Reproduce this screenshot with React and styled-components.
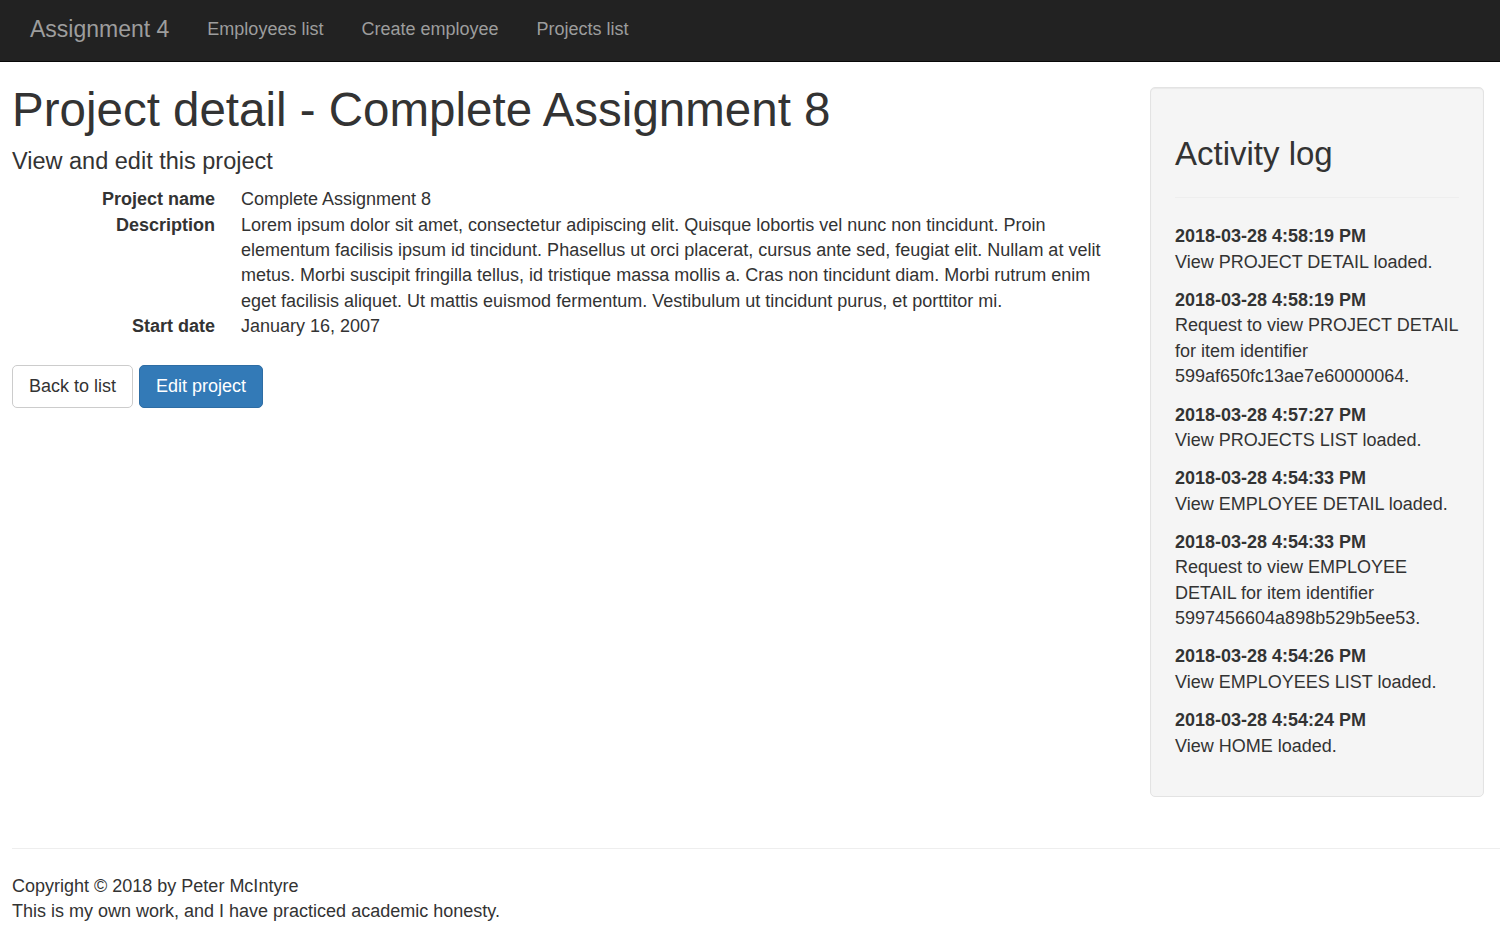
import styled, { createGlobalStyle } from 'styled-components';

const GlobalStyle = createGlobalStyle`
  html, body {
    margin: 0;
    padding: 0;
    background: #fff;
  }
  body {
    font-family: "Liberation Sans", Arial, Helvetica, sans-serif;
    font-size: 18px;
    line-height: 25.4px;
    color: #333;
  }
  * {
    box-sizing: border-box;
  }
`;

const activity = [
  { time: '2018-03-28 4:58:19 PM', text: 'View PROJECT DETAIL loaded.' },
  {
    time: '2018-03-28 4:58:19 PM',
    text: 'Request to view PROJECT DETAIL for item identifier 599af650fc13ae7e60000064.',
  },
  { time: '2018-03-28 4:57:27 PM', text: 'View PROJECTS LIST loaded.' },
  { time: '2018-03-28 4:54:33 PM', text: 'View EMPLOYEE DETAIL loaded.' },
  {
    time: '2018-03-28 4:54:33 PM',
    text: 'Request to view EMPLOYEE DETAIL for item identifier 5997456604a898b529b5ee53.',
  },
  { time: '2018-03-28 4:54:26 PM', text: 'View EMPLOYEES LIST loaded.' },
  { time: '2018-03-28 4:54:24 PM', text: 'View HOME loaded.' },
];

function App() {
  return (
    <>
      <GlobalStyle />
      <Navbar>
        <Brand href="#">Assignment 4</Brand>
        <NavLink href="#">Employees list</NavLink>
        <NavLink href="#">Create employee</NavLink>
        <NavLink href="#">Projects list</NavLink>
      </Navbar>

      <Page>
        <Main>
          <Title>Project detail - Complete Assignment 8</Title>
          <Subtitle>View and edit this project</Subtitle>

          <DetailList>
            <dt>Project name</dt>
            <dd>Complete Assignment 8</dd>
            <dt>Description</dt>
            <dd>
              Lorem ipsum dolor sit amet, consectetur adipiscing elit. Quisque
              lobortis vel nunc non tincidunt. Proin elementum facilisis ipsum id
              tincidunt. Phasellus ut orci placerat, cursus ante sed, feugiat elit.
              Nullam at velit metus. Morbi suscipit fringilla tellus, id tristique
              massa mollis a. Cras non tincidunt diam. Morbi rutrum enim eget
              facilisis aliquet. Ut mattis euismod fermentum. Vestibulum ut
              tincidunt purus, et porttitor mi.
            </dd>
            <dt>Start date</dt>
            <dd>January 16, 2007</dd>
          </DetailList>

          <Actions>
            <Button>Back to list</Button>
            <Button $primary>Edit project</Button>
          </Actions>
        </Main>

        <Well>
          <WellTitle>Activity log</WellTitle>
          <Rule />
          {activity.map((item, i) => (
            <LogEntry key={i}>
              <strong>{item.time}</strong>
              <br />
              {item.text}
            </LogEntry>
          ))}
        </Well>
      </Page>

      <Footer>
        <FooterRule />
        <FooterText>
          Copyright © 2018 by Peter McIntyre
          <br />
          This is my own work, and I have practiced academic honesty.
        </FooterText>
      </Footer>
    </>
  );
}

export default App;

const Navbar = styled.nav`
  display: flex;
  align-items: center;
  height: 62px;
  padding: 0 0 3px 11px;
  background: #222;
  border-bottom: 1px solid #080808;
`;

const Brand = styled.a`
  padding: 0 19px;
  font-size: 23px;
  line-height: 58px;
  color: #9d9d9d;
  text-decoration: none;
`;

const NavLink = styled.a`
  padding: 0 19px;
  font-size: 18px;
  line-height: 58px;
  color: #9d9d9d;
  text-decoration: none;
`;

const Page = styled.div`
  display: grid;
  grid-template-columns: 1fr 334px;
  column-gap: 25px;
  align-items: start;
  padding: 0 16px 0 12px;
`;

const Main = styled.main`
  min-width: 0;
`;

const Title = styled.h1`
  margin: 22px 0 0;
  font-size: 47.5px;
  font-weight: 500;
  line-height: 1.1;
  color: #333;
`;

const Subtitle = styled.h4`
  margin: 13px 0 12px;
  font-size: 23.5px;
  font-weight: 500;
  line-height: 1.1;
`;

const DetailList = styled.dl`
  display: grid;
  grid-template-columns: 203px 1fr;
  column-gap: 26px;
  margin: 0 0 25px;

  dt {
    font-weight: 700;
    text-align: right;
  }

  dd {
    margin: 0;
  }
`;

const Actions = styled.div`
  display: flex;
  gap: 6px;
`;

const Button = styled.button`
  height: 43px;
  padding: 0 16px;
  font-family: inherit;
  font-size: 18px;
  line-height: 25px;
  color: ${p => (p.$primary ? '#fff' : '#333')};
  background: ${p => (p.$primary ? '#337ab7' : '#fff')};
  border: 1px solid ${p => (p.$primary ? '#2e6da4' : '#ccc')};
  border-radius: 5px;
  cursor: pointer;
`;

const Well = styled.aside`
  margin-top: 25px;
  padding: 24px;
  background: #f5f5f5;
  border: 1px solid #e3e3e3;
  border-radius: 5px;
  box-shadow: inset 0 1px 1px rgba(0, 0, 0, 0.05);
`;

const WellTitle = styled.h3`
  margin: 24px 0 0;
  font-size: 33px;
  font-weight: 500;
  line-height: 1.1;
`;

const Rule = styled.hr`
  margin: 25px 0 26px;
  border: 0;
  border-top: 1px solid #eee;
`;

const LogEntry = styled.p`
  margin: 0 0 12.9px;

  strong {
    font-weight: 700;
  }
`;

const Footer = styled.footer`
  margin-top: 51px;
  padding-left: 12px;
`;

const FooterRule = styled.hr`
  margin: 0 0 25px;
  border: 0;
  border-top: 1px solid #eee;
`;

const FooterText = styled.p`
  margin: 0;
`;
